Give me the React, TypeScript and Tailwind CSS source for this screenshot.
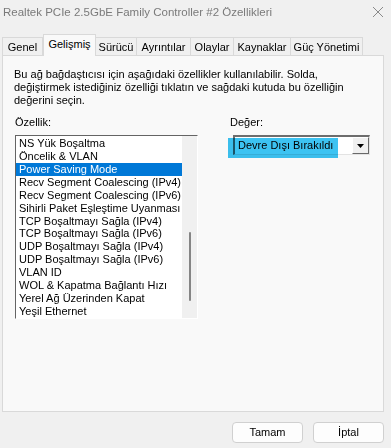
import React from 'react';

const ITEMS = [
  'NS Yük Boşaltma',
  'Öncelik & VLAN',
  'Power Saving Mode',
  'Recv Segment Coalescing (IPv4)',
  'Recv Segment Coalescing (IPv6)',
  'Sihirli Paket Eşleştime Uyanması',
  'TCP Boşaltmayı Sağla (IPv4)',
  'TCP Boşaltmayı Sağla (IPv6)',
  'UDP Boşaltmayı Sağla (IPv4)',
  'UDP Boşaltmayı Sağla (IPv6)',
  'VLAN ID',
  'WOL & Kapatma Bağlantı Hızı',
  'Yerel Ağ Üzerinden Kapat',
  'Yeşil Ethernet',
];

const TABS = [
  { label: 'Genel', w: 'w-[41px]' },
  { label: 'Gelişmiş', w: 'w-[53px]', active: true },
  { label: 'Sürücü', w: 'w-[41px]' },
  { label: 'Ayrıntılar', w: 'w-[54px]' },
  { label: 'Olaylar', w: 'w-[43px]' },
  { label: 'Kaynaklar', w: 'w-[57px]' },
  { label: 'Güç Yönetimi', w: 'w-[72px]' },
];

export default function App() {
  return (
    <div className="w-[391px] h-[448px] bg-[#f0f0f0] text-[11px] leading-[13px] text-black font-['Liberation_Sans',sans-serif] flex flex-col overflow-hidden">
      {/* başlık çubuğu */}
      <div className="h-[34px] flex items-start justify-between pt-[6px] pl-[3px] pr-[6px]">
        <span className="text-[#7a7a7a] text-[11.5px] leading-[13px]">
          Realtek PCIe 2.5GbE Family Controller #2 Özellikleri
        </span>
        <svg width="12" height="12" viewBox="0 0 12 12" className="mr-[1px]">
          <path d="M1 1 L11 11 M11 1 L1 11" stroke="#8a8a8a" strokeWidth="1" />
        </svg>
      </div>

      {/* sekmeler */}
      <div className="flex items-end h-[21px] pl-[2px] whitespace-nowrap">
        {TABS.map((t) =>
          t.active ? (
            <div
              key={t.label}
              className={`${t.w} h-[22px] -mb-[1px] bg-[#f9f9f9] border border-b-0 border-[#d9d9d9] flex items-start justify-center pt-[3px] relative z-10`}
            >
              {t.label}
            </div>
          ) : (
            <div
              key={t.label}
              className={`${t.w} h-[18px] bg-[#f0f0f0] border border-b-0 border-l-0 first:border-l border-[#d9d9d9] flex items-center justify-center pt-[1px]`}
            >
              {t.label}
            </div>
          )
        )}
      </div>

      {/* panel */}
      <div className="mx-[2px] w-[382px] h-[357px] bg-[#f9f9f9] border border-[#d9d9d9] flex flex-col pl-[11px] pt-[12px]">
        <p className="whitespace-nowrap">
          Bu ağ bağdaştıcısı için aşağıdaki özellikler kullanılabilir. Solda,
          <br />
          değiştirmek istediğiniz özelliği tıklatın ve sağdaki kutuda bu özelliğin
          <br />
          değerini seçin.
        </p>

        <div className="flex mt-[9px]">
          <div className="flex flex-col w-[216px]">
            <span className="pl-[1px]">Özellik:</span>
            <div className="mt-[6px] ml-[1px] w-[183px] h-[184px] border-t border-l border-[#646464] border-r border-b border-r-[#ffffff] border-b-[#ffffff] flex bg-white">
              <ul className="flex-1 flex flex-col pt-[1px]">
                {ITEMS.map((it) => (
                  <li
                    key={it}
                    className={`h-[13px] pl-[3px] whitespace-nowrap overflow-hidden ${
                      it === 'Power Saving Mode' ? 'bg-[#0078d7] text-white' : ''
                    }`}
                  >
                    {it}
                  </li>
                ))}
              </ul>
              <div className="w-[15px] bg-[#f0f0f0] flex justify-center pt-[96px]">
                <div className="w-[2px] h-[69px] rounded-full bg-[#858585]" />
              </div>
            </div>
          </div>

          <div className="flex flex-col">
            <span>Değer:</span>
            <div className="relative mt-[6px] ml-[3px]">
              <div className="w-[137px] h-[20px] border-t-2 border-l-2 border-[#6d6d6d] border-r border-b border-r-[#e3e3e3] border-b-[#e3e3e3] bg-white flex">
                <div className="flex-1 pl-[3px] pt-[2px] whitespace-nowrap">Devre Dışı Bırakıldı</div>
                <div className="w-[17px] h-[17px] bg-[#f0f0f0] border-r border-b border-[#696969] border-t border-l border-t-white border-l-white flex items-center justify-center">
                  <svg width="7" height="4" viewBox="0 0 7 4">
                    <path d="M0 0 H7 L3.5 4 Z" fill="#000" />
                  </svg>
                </div>
              </div>
              <div className="absolute left-[-5px] top-[3px] w-[110px] h-[20px] bg-[#3cc3f2] mix-blend-multiply" />
            </div>
          </div>
        </div>
      </div>

      {/* düğmeler */}
      <div className="flex justify-end gap-[10px] pr-[7px] pt-[10px]">
        <button className="w-[71px] h-[21px] rounded-[4px] bg-[#fdfdfd] border border-[#d0d0d0] text-[11px] leading-[13px]">
          Tamam
        </button>
        <button className="w-[71px] h-[21px] rounded-[4px] bg-[#fdfdfd] border border-[#d0d0d0] text-[11px] leading-[13px]">
          İptal
        </button>
      </div>
    </div>
  );
}
